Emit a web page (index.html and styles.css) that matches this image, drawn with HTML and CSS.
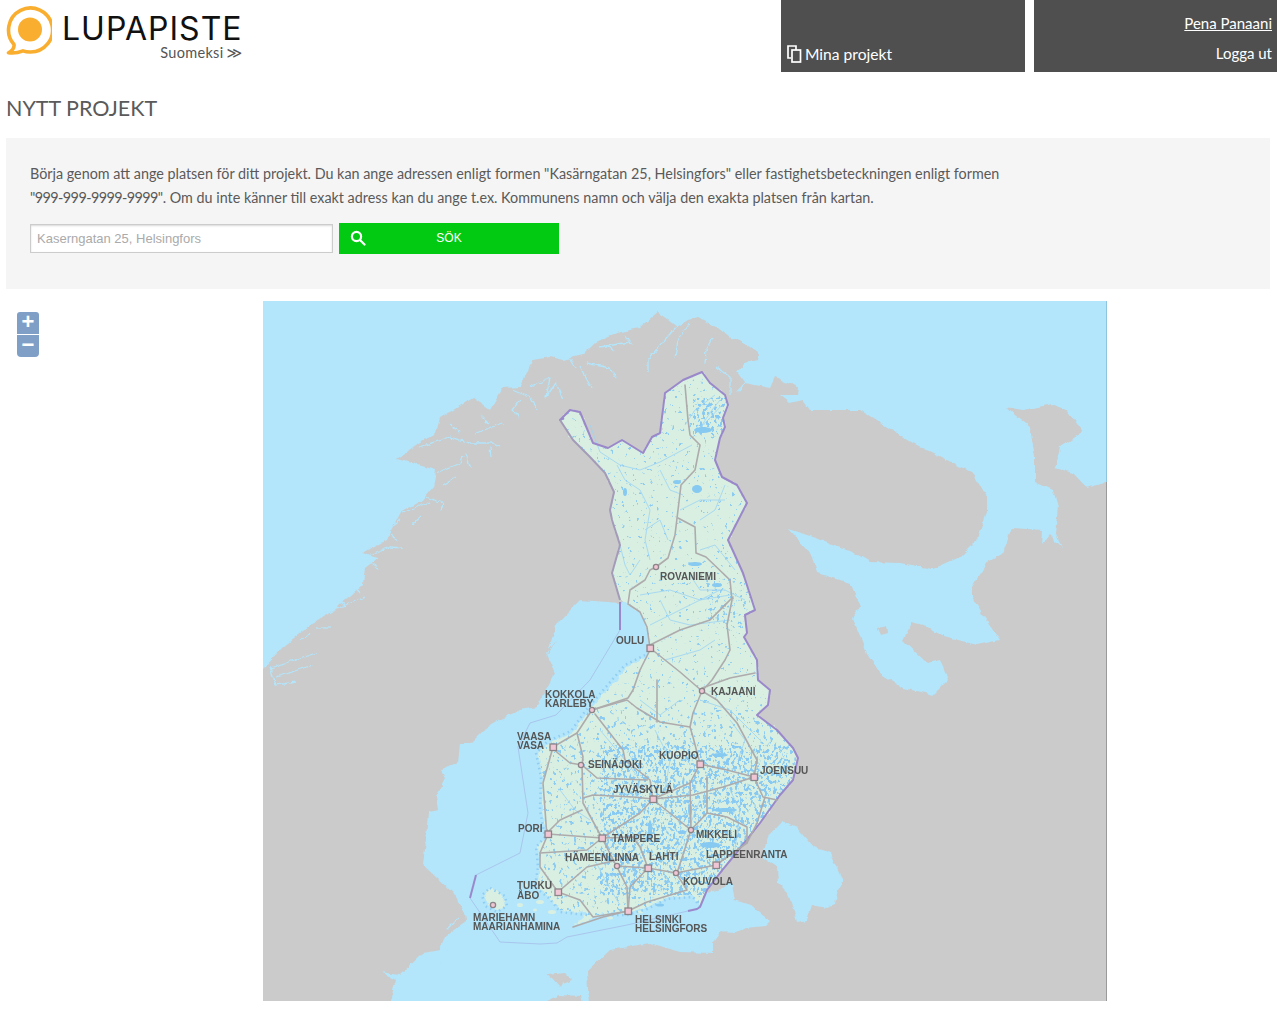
FILE: index.html
```html
<!DOCTYPE html>
<html lang="sv">
<head>
<meta charset="utf-8">
<title>Lupapiste - Nytt projekt</title>
<link rel="stylesheet" href="styles.css">
</head>
<body>
<header class="site-header">
  <a class="logo" href="#">
    <svg class="logo-mark" viewBox="0 0 52 58" width="52" height="58">
      <path class="logo-ring" d="M30 52A22 22 0 1 0 14 44.500C14.500 48 12 51 8.500 52.800C14 53.500 19 52.500 23 50.800Q26 52 30 52Z"/>
      <circle class="logo-dot" cx="30" cy="29.500" r="12"/>
    </svg>
    <span class="logo-words">
      <span class="logo-name">LUPAPISTE</span>
      <span class="logo-lang">Suomeksi <span class="lang-arrows">≫</span></span>
    </span>
  </a>
  <nav class="nav-boxes">
    <a class="nav-box nav-projects" href="#">
      <svg class="copy-icon" viewBox="0 0 15 18" width="15" height="18">
        <path d="M4 13H1V1H9V5"/><rect x="5" y="5" width="8.500" height="12"/>
      </svg>
      <span>Mina projekt</span>
    </a>
    <div class="nav-box nav-user">
      <a class="user-name" href="#">Pena Panaani</a>
      <a class="logout" href="#">Logga ut</a>
    </div>
  </nav>
</header>
<main>
  <h1 class="page-title">NYTT PROJEKT</h1>
  <section class="search-panel">
    <p class="intro">Börja genom att ange platsen för ditt projekt. Du kan ange adressen enligt formen "Kasärngatan 25, Helsingfors" eller fastighetsbeteckningen enligt formen <span class="digits">"999-999-9999-9999"</span>. Om du inte känner till exakt adress kan du ange t.ex. Kommunens namn och välja den exakta platsen från kartan.</p>
    <form class="search-form">
      <input class="search-input" type="text" placeholder="Kaserngatan 25, Helsingfors">
      <button class="search-button" type="button">
        <svg class="search-icon" viewBox="0 0 16 16" width="16" height="16"><circle cx="6.500" cy="6.500" r="4.600"/><path d="M10 10L14.500 14.500"/></svg>
        <span>SÖK</span>
      </button>
    </form>
  </section>
  <section class="map-area">
    <div class="zoom-control">
      <button class="zoom-btn zoom-in" type="button">+</button>
      <button class="zoom-btn zoom-out" type="button">−</button>
    </div>
    <svg class="map" viewBox="263 301 844 700" width="844" height="700">
      <defs>
        <filter id="rough" filterUnits="userSpaceOnUse" x="240" y="280" width="900" height="740" color-interpolation-filters="sRGB">
          <feTurbulence type="fractalNoise" baseFrequency=".1" numOctaves="3" seed="7"/>
          <feDisplacementMap in="SourceGraphic" scale="5" xChannelSelector="R" yChannelSelector="G"/>
          <feGaussianBlur stdDeviation=".35"/>
        </filter>
        <filter id="roughFine" filterUnits="userSpaceOnUse" x="240" y="280" width="900" height="740" color-interpolation-filters="sRGB">
          <feTurbulence type="fractalNoise" baseFrequency=".18" numOctaves="2" seed="5"/>
          <feDisplacementMap in="SourceGraphic" scale="5" xChannelSelector="R" yChannelSelector="G"/>
          <feGaussianBlur stdDeviation=".4"/>
        </filter>
        <filter id="soft" filterUnits="userSpaceOnUse" x="240" y="280" width="900" height="740">
          <feGaussianBlur stdDeviation=".35"/>
        </filter>
        <filter id="speckLight" x="0" y="0" width="1" height="1" color-interpolation-filters="sRGB">
          <feTurbulence type="fractalNoise" baseFrequency=".28" numOctaves="2" seed="3"/>
          <feColorMatrix values="0 0 0 0 .55  0 0 0 0 .80  0 0 0 0 .95  0 0 0 16 -11"/>
        </filter>
        <filter id="speckMid" x="0" y="0" width="1" height="1" color-interpolation-filters="sRGB">
          <feTurbulence type="fractalNoise" baseFrequency=".3 .24" numOctaves="2" seed="9"/>
          <feColorMatrix values="0 0 0 0 .55  0 0 0 0 .80  0 0 0 0 .95  0 0 0 14 -8.700"/>
        </filter>
        <filter id="speckDense" x="0" y="0" width="1" height="1" color-interpolation-filters="sRGB">
          <feTurbulence type="fractalNoise" baseFrequency=".34 .26" numOctaves="2" seed="11"/>
          <feColorMatrix values="0 0 0 0 .53  0 0 0 0 .79  0 0 0 0 .95  0 0 0 14 -7.600"/>
        </filter>
        <clipPath id="finlandClip">
          <path d="M702 372L710 383L725 395L728 405L723 418L725 427L720 438L715 460L722 477L737 485L747 503L728 540L743 573L755 610L745 615L747 633L744 637L757 660L758 680L770 690L768 705L757 715L777 730L793 748L798 758L793 780L780 795L760 823L733 857L720 873L707 890L700 907L693 895L667 897L647 907L627 913L603 913L573 927L587 913L560 910L550 897L537 887L540 867L538 847L547 837L542 810L543 777L538 753L550 743L573 733L588 712L607 690L617 680L627 667L647 657L650 643L647 627L640 612L627 603L620 600L612 573L620 545L612 520L610 510L614 492L605 473L590 457L573 440L560 420L570 410L580 412L593 443L608 448L622 440L643 453L652 437L660 433L665 393L683 380Z"/>
        </clipPath>
      </defs>

      <rect class="sea" x="263" y="301" width="844" height="700"/>
      <g filter="url(#rough)">
        <path class="land" d="M250 672L263 668L283 647L313 623L330 612L350 597L363 585L365 567L378 557L363 553L386 540L400 513L423 500L433 487L436 470L397 459L420 442L436 433L440 418L473 398L490 410L503 388L520 387L533 360L550 357L563 360L583 355L596 342L620 332L640 328L647 322L658 313L668 320L677 327L688 320L698 317L712 325L718 328L730 338L740 340L758 353L757 360L745 363L737 372L745 383L770 388L775 377L798 387L797 395L780 395L790 403L803 400L810 410L860 410L913 443L963 468L973 473L987 497L987 513L977 540L960 557L933 569L900 563L870 562L853 552L837 547L813 537L788 529L813 557L817 573L850 583L860 607L852 618L867 653L880 673L903 688L933 695L948 680L940 660L927 663L903 640L912 623L930 628L947 637L977 645L1000 640L987 620L972 597L972 587L987 562L1003 553L1012 528L1043 530L1042 545L1050 535L1063 548L1055 533L1058 507L1053 490L1035 482L1035 457L1030 427L1005 407L1023 410L1053 404L1067 410L1083 432L1060 447L1055 468L1073 473L1087 488L1107 482L1125 478L1125 1020L590 1020L587 972L610 950L650 943L680 952L713 953L713 933L727 932L740 927L750 912L772 922L773 923L750 909L732 902L728 887L707 893L680 700L665 620L628 597L621 603L580 600L556 625L546 658L556 640L546 653L555 673L536 707L520 710L503 718L483 730L470 743L460 743L458 763L441 770L445 780L436 797L438 810L428 812L426 840L423 865L436 877L453 893L465 913L466 922L445 937L440 950L423 953L400 975L380 972L396 980L391 998L393 1020L250 1020Z"/>
        <path class="land" d="M547 975L565 973L572 980L562 984L560 988L553 980Z"/>
        <path class="land" d="M543 1003L560 995L580 996L582 1003Z"/>
        <path class="sea-fill" d="M782 822L797 828L813 847L830 853L840 875L844 880L838 890L835 905L827 908L812 905L807 920L797 922L788 893L778 883L777 867L762 857L768 837Z"/>
        <path class="land" d="M878 628L886 626L887 634L881 636Z"/>
        <path class="sea-fill" d="M1012 511L1018 513L1017 517L1012 515Z"/>
        <path class="sea-fill" d="M731 880L735 900L750 905L770 921L765 926L745 928L735 933L720 932L715 940L700 950L695 920Z"/>
      </g>
      <g class="fjords" filter="url(#roughFine)">
        <path d="M677 326L660 345L648 360L648 372"/>
        <path d="M690 322L678 340L675 358"/>
        <path d="M712 338L706 350L705 365"/>
        <path d="M716 367L730 377L730 396"/>
        <path d="M745 383L737 392"/>
        <path d="M420 447L450 437L470 443L493 443L500 447"/>
        <path d="M466 453L470 467"/>
        <path d="M490 447L491 458"/>
        <path d="M436 473L460 463L463 457"/>
        <path d="M443 485L456 477"/>
        <path d="M426 497L443 503L441 510"/>
        <path d="M403 513L416 507L430 502"/>
        <path d="M383 533L400 520"/>
        <path d="M363 557L390 547L403 548"/>
        <path d="M370 563L378 568"/>
        <path d="M326 613L366 597"/>
        <path d="M316 628L330 628"/>
        <path d="M476 433L503 423"/>
        <path d="M513 390L530 397L538 410"/>
        <path d="M530 387L550 378L546 397L556 383L563 400"/>
        <path d="M580 367L591 387"/>
        <path d="M586 363L610 368L616 378"/>
        <path d="M600 347L630 342"/>
        <path d="M270 668L316 653"/>
        <path d="M270 668L276 685L296 682"/>
        <path d="M276 677L313 665"/>
        <path d="M607 345L615 352"/>
        <path d="M625 335L632 345"/>
        <path d="M570 358L576 368"/>
        <path d="M520 400L512 410L520 418"/>
        <path d="M480 415L490 425"/>
        <path d="M450 425L460 432"/>
        <path d="M412 525L420 516"/>
        <path d="M390 535L398 540"/>
        <path d="M350 585L360 592"/>
        <path d="M338 600L346 606"/>
        <path d="M300 640L310 634"/>
        <path d="M440 965L448 948"/>
        <path d="M446 930L458 918"/>
      </g>

      <g filter="url(#soft)">
        <path class="finland" filter="url(#roughFine)" d="M702 372L710 383L725 395L728 405L723 418L725 427L720 438L715 460L722 477L737 485L747 503L728 540L743 573L755 610L745 615L747 633L744 637L757 660L758 680L770 690L768 705L757 715L777 730L793 748L798 758L793 780L780 795L760 823L733 857L720 873L707 890L700 907L693 895L667 897L647 907L627 913L603 913L573 927L587 913L560 910L550 897L537 887L540 867L538 847L547 837L542 810L543 777L538 753L550 743L573 733L588 712L607 690L617 680L627 667L647 657L650 643L647 627L640 612L627 603L620 600L612 573L620 545L612 520L610 510L614 492L605 473L590 457L573 440L560 420L570 410L580 412L593 443L608 448L622 440L643 453L652 437L660 433L665 393L683 380Z"/>
        <path class="finland" filter="url(#roughFine)" d="M484 895L490 889L497 890L503 897L505 906L497 910L488 905Z"/>
        <g class="islets">
          <ellipse cx="520" cy="905" rx="3" ry="2"/><ellipse cx="530" cy="895" rx="3" ry="2"/><ellipse cx="540" cy="902" rx="4" ry="2"/>
          <ellipse cx="552" cy="912" rx="4" ry="2"/><ellipse cx="535" cy="910" rx="2" ry="1.500"/><ellipse cx="525" cy="885" rx="2" ry="2"/>
          <ellipse cx="610" cy="918" rx="3" ry="1.500"/><ellipse cx="640" cy="912" rx="3" ry="1.500"/>
        </g>
        <path class="coast-specks" d="M700 907L693 897L667 899L647 909L627 915L603 915M587 915L560 912L550 899L535 887L538 867L536 847L545 837L540 810L541 777L536 753L548 741L571 731L586 710L605 688L625 665L645 655M490 888L505 896L507 906L497 912L485 906L482 895Z"/>
        <g clip-path="url(#finlandClip)">
          <rect x="550" y="360" width="250" height="350" filter="url(#speckLight)"/>
          <rect x="535" y="710" width="265" height="205" filter="url(#speckMid)"/>
          <rect x="600" y="745" width="190" height="150" filter="url(#speckDense)"/>
          <rect x="693" y="398" width="34" height="38" filter="url(#speckDense)"/>
          <rect x="705" y="578" width="45" height="50" filter="url(#speckMid)"/>
        </g>
        <g class="rivers">
          <path d="M685 425L695 410L715 395"/><path d="M702 425L712 410L720 400"/><path d="M695 432L708 420L722 405"/>
          <path d="M590 425L600 452L620 465L640 470L660 462L692 445"/>
          <path d="M617 465L625 480L640 490L650 510L645 540L650 560"/>
          <path d="M660 470L670 490L683 495"/><path d="M680 510L700 500L725 500"/><path d="M700 520L715 510L725 485"/>
          <path d="M645 530L660 520L668 540"/><path d="M620 545L625 565L630 575L640 560"/>
          <path d="M700 550L715 545L735 570"/><path d="M640 595L670 590L700 600L730 595"/>
          <path d="M650 625L680 610L720 590"/><path d="M660 600L670 620L690 625L730 620"/>
          <path d="M690 575L700 590L725 590L745 600"/><path d="M665 660L700 650L715 640"/>
          <path d="M700 700L730 710L760 740"/><path d="M730 720L745 740L738 760"/><path d="M640 700L660 715L680 700"/>
          <path d="M600 730L625 760L640 780L635 800"/><path d="M655 730L670 760L665 790"/>
          <path d="M700 800L690 825L670 860"/><path d="M730 790L740 810L735 850"/><path d="M560 790L575 810L590 820"/>
          <path d="M590 850L605 880L620 905"/><path d="M655 820L640 850"/>
        </g>
        <g class="lakes">
          <ellipse cx="677" cy="482" rx="4" ry="2"/><ellipse cx="697" cy="489" rx="5" ry="4"/><ellipse cx="703" cy="430" rx="9" ry="3"/>
          <ellipse cx="625" cy="492" rx="2" ry="4"/><ellipse cx="717" cy="585" rx="5" ry="2"/><ellipse cx="695" cy="564" rx="7" ry="2"/>
          <ellipse cx="690" cy="810" rx="2" ry="6"/><ellipse cx="725" cy="810" rx="12" ry="2"/><ellipse cx="710" cy="845" rx="10" ry="3"/>
          <ellipse cx="650" cy="830" rx="2" ry="10"/><ellipse cx="720" cy="755" rx="7" ry="2"/><ellipse cx="660" cy="905" rx="4" ry="1.500"/>
        </g>
        <path class="sea-border" d="M620 630L590 680L556 715L530 723L518 747L528 813L520 853L476 875"/>
        <path class="sea-border" d="M470 898L500 942L540 944L557 943L567 937L627 925L688 911"/>
        <path class="border" d="M688 911L697 909L700 907L707 890L720 873L733 857L760 823L780 795L793 780L798 758L793 748L777 730L757 715L768 705L770 690L758 680L757 660L744 637L747 633L745 615L755 610L743 573L728 540L747 503L737 485L722 477L715 460L720 438L725 427L723 418L728 405L725 395L710 383L702 372L683 380L665 393L660 433L652 437L643 453L622 440L608 448L593 443L580 412L570 410L560 420L564 418"/>
        <path class="border-dim" d="M560 420L573 440L590 457L605 473L614 492L610 510L612 520L620 545L612 573L620 600"/>
        <path class="border" d="M620 602L620 630"/>
        <path class="border" d="M476 875L470 898"/>
        <g class="roads">
          <path d="M650 648L647 627L640 612L628 604L630 590L645 580L650 570L656 567L668 558L675 535L678 510L681 485L695 470L700 445L690 435L688 420L685 385"/>
          <path d="M678 518L695 527L696 553L706 557L730 580L732 600L727 625L730 650L725 660L712 680L702 691"/>
          <path d="M650 645L680 630L710 620L733 597"/>
          <path d="M650 648L665 660L680 672L702 691"/>
          <path d="M702 688L730 678L755 673"/>
          <path d="M650 650L640 670L633 690L628 698L592 710"/>
          <path d="M592 710L627 700L637 708L660 722L690 727L693 713L702 691"/>
          <path d="M657 680L657 722"/>
          <path d="M592 710L577 733L553 747"/>
          <path d="M577 733L583 757L582 765L583 803L602 838"/>
          <path d="M595 714L623 750L625 760L650 780L653 799"/>
          <path d="M553 747L543 783L547 837"/>
          <path d="M553 749L570 763L582 765"/>
          <path d="M582 765L597 778L647 780"/>
          <path d="M583 798L593 795L633 797L653 799"/>
          <path d="M653 799L690 783L700 764"/>
          <path d="M700 764L693 737L690 727"/>
          <path d="M700 764L727 770L754 777"/>
          <path d="M754 777L757 760L737 723L717 700L702 691"/>
          <path d="M754 777L763 797L777 800"/>
          <path d="M765 797L757 823L747 843L716 865"/>
          <path d="M653 799L693 795L723 787L754 777"/>
          <path d="M656 802L691 830"/>
          <path d="M653 799L640 813L602 838"/>
          <path d="M548 834L602 838"/>
          <path d="M548 832L560 820L582 810"/>
          <path d="M691 830L677 873"/>
          <path d="M691 830L707 813L727 817L747 827L747 843"/>
          <path d="M690 783L691 830"/>
          <path d="M707 777L707 813"/>
          <path d="M602 838L617 867"/>
          <path d="M602 838L633 837L640 847L648 868"/>
          <path d="M617 866L648 868L676 873L716 865"/>
          <path d="M648 868L630 887L628 912"/>
          <path d="M617 867L627 887L628 912"/>
          <path d="M558 892L587 867L617 860"/>
          <path d="M558 892L580 900L593 917L628 911"/>
          <path d="M573 927L603 917L628 911"/>
          <path d="M548 834L540 853L540 867L558 892"/>
          <path d="M540 853L587 850L602 838"/>
          <path d="M628 911L647 902L687 890L676 873"/>
        </g>
      </g>

      <g class="markers">
        <circle cx="656" cy="567" r="2.600"/><circle cx="702" cy="691" r="2.600"/><circle cx="592" cy="710" r="2.600"/>
        <circle cx="581" cy="765" r="2.600"/><circle cx="691" cy="830" r="2.600"/><circle cx="617" cy="866" r="2.600"/>
        <circle cx="676" cy="873" r="2.600"/><circle cx="493" cy="905" r="2.600"/>
        <rect x="647" y="645" width="6.500" height="6.500"/><rect x="550" y="744" width="6.500" height="6.500"/>
        <rect x="697" y="761" width="6.500" height="6.500"/><rect x="751" y="774" width="6.500" height="6.500"/>
        <rect x="650" y="796" width="6.500" height="6.500"/><rect x="545" y="831" width="6.500" height="6.500"/>
        <rect x="599" y="835" width="6.500" height="6.500"/><rect x="645" y="865" width="6.500" height="6.500"/>
        <rect x="713" y="862" width="6.500" height="6.500"/><rect x="555" y="889" width="6.500" height="6.500"/>
        <rect x="625" y="908" width="6.500" height="6.500"/>
      </g>

      <g class="labels">
        <text x="660" y="580">ROVANIEMI</text>
        <text x="616" y="644">OULU</text>
        <text x="711" y="695">KAJAANI</text>
        <text x="545" y="698">KOKKOLA</text>
        <text x="545" y="707">KARLEBY</text>
        <text x="517" y="740">VAASA</text>
        <text x="517" y="749">VASA</text>
        <text x="659" y="759">KUOPIO</text>
        <text x="588" y="768">SEINÄJOKI</text>
        <text x="760" y="774">JOENSUU</text>
        <text x="613" y="793">JYVÄSKYLÄ</text>
        <text x="518" y="832">PORI</text>
        <text x="696" y="838">MIKKELI</text>
        <text x="612" y="842">TAMPERE</text>
        <text x="565" y="861">HÄMEENLINNA</text>
        <text x="649" y="860">LAHTI</text>
        <text x="706" y="858">LAPPEENRANTA</text>
        <text x="683" y="885">KOUVOLA</text>
        <text x="517" y="889">TURKU</text>
        <text x="517" y="899">ÅBO</text>
        <text x="473" y="921">MARIEHAMN</text>
        <text x="473" y="930">MAARIANHAMINA</text>
        <text x="635" y="923">HELSINKI</text>
        <text x="635" y="932">HELSINGFORS</text>
      </g>
      <path class="map-edge" d="M1106.500 301V482"/>
      <path class="map-edge-land" d="M1106.500 482V1001"/>
    </svg>
  </section>
</main>
</body>
</html>
```
FILE: styles.css
```css
* { box-sizing: border-box; }
html, body { margin: 0; padding: 0; }
body {
  background: #fff;
  color: #555;
  font-family: "Lato", "Open Sans", sans-serif;
  width: 1282px;
  overflow-x: hidden;
}
a { color: inherit; text-decoration: none; }

.site-header {
  display: flex;
  justify-content: space-between;
  height: 72px;
  padding: 0 5px 0 0;
}
.logo { display: flex; align-items: flex-start; }
.logo-mark { display: block; flex: none; margin-right: 10px; }
.logo-ring { fill: none; stroke: #f9ae2f; stroke-width: 3.6; stroke-linejoin: round; }
.logo-dot { fill: #f9ae2f; }
.logo-words { display: flex; flex-direction: column; align-items: flex-end; padding-top: 13px; }
.logo-name {
  font-family: "Inter", "Liberation Sans", sans-serif;
  font-size: 32px;
  line-height: 32px;
  letter-spacing: 1px;
  color: #111;
}
.logo-lang { font-size: 14.500px; line-height: 15px; letter-spacing: .3px; color: #555; }
.lang-arrows { font-family: "DejaVu Sans", sans-serif; font-size: 15px; margin-left: -1px; }

.nav-boxes { display: flex; gap: 9px; }
.nav-box {
  background: #4f4f4f;
  color: #fff;
  height: 72px;
  display: flex;
}
.nav-projects {
  width: 244px;
  align-items: flex-end;
  padding: 0 0 8px 6px;
  font-size: 15.600px;
  line-height: 20px;
  gap: 3px;
}
.copy-icon { display: block; fill: none; stroke: #fff; stroke-width: 1.7; margin-bottom: 1px; }
.nav-user {
  width: 243px;
  flex-direction: column;
  align-items: flex-end;
  padding: 14px 5px 0 0;
  font-size: 15px;
  line-height: 18px;
}
.user-name { text-decoration: underline; }
.logout { margin-top: 12px; }

.page-title {
  margin: 0;
  padding: 23px 0 0 6px;
  height: 66px;
  font-weight: 400;
  font-size: 21.500px;
  line-height: 26px;
  color: #5a5a5a;
}

.search-panel {
  margin: 0 12px 0 6px;
  height: 151px;
  background: #f5f5f5;
  padding: 24px 24px 0;
}
.intro {
  margin: 0;
  width: 985px;
  font-size: 14.350px;
  line-height: 24px;
  color: #5a5a5a;
}
.digits { letter-spacing: -.55px; }
.search-form { display: flex; align-items: center; gap: 6px; margin-top: 13px; }
.search-input {
  width: 303px;
  height: 29px;
  border: 1px solid #ccc;
  box-shadow: inset 0 1px 2px rgba(0,0,0,.15);
  background: #fff;
  padding: 0 6px;
  font-family: "Liberation Sans", Arial, sans-serif;
  font-size: 13px;
  color: #333;
}
.search-input::placeholder { color: #aaa; opacity: 1; }
.search-button {
  position: relative;
  width: 220px;
  height: 31px;
  border: 0;
  padding: 0 0 2px;
  background: #02ca12;
  color: #fff;
  font-family: "Liberation Sans", Arial, sans-serif;
  font-size: 12px;
  display: flex;
  align-items: center;
  justify-content: center;
}
.search-icon {
  position: absolute;
  left: 11px;
  top: 7px;
  fill: none;
  stroke: #fff;
  stroke-width: 2.2;
  stroke-linecap: round;
}

.map-area { position: relative; margin: 12px 0 0 263px; height: 700px; width: 844px; }
.map { display: block; }
.zoom-control {
  position: absolute;
  left: -246px;
  top: 11px;
  display: flex;
  flex-direction: column;
  gap: 1px;
}
.zoom-btn {
  width: 22px;
  height: 22px;
  border: 0;
  padding: 0 0 2px;
  background: #7f9fc7;
  color: #fff;
  font-family: "Liberation Sans", Arial, sans-serif;
  font-weight: 700;
  font-size: 22px;
  line-height: 20px;
}
.zoom-in { border-radius: 3px 3px 0 0; }
.zoom-out { border-radius: 0 0 4px 4px; }

.sea { fill: #b3e5fb; }
.sea-fill { fill: #b3e5fb; }
.land { fill: #cbcbcb; }
.fjords path { fill: none; stroke: #b3e5fb; stroke-width: 1.300; stroke-linejoin: round; }
.finland { fill: #d8efe2; }
.islets ellipse { fill: #d8efe2; }
.coast-specks { fill: none; stroke: #8fcdf3; stroke-width: 2.500; stroke-dasharray: 1.500 3.500; }
.rivers path { fill: none; stroke: #9cd3f4; stroke-width: .8; }
.lakes ellipse { fill: #86c9f1; }
.border { fill: none; stroke: #9a88cb; stroke-width: 2; stroke-linejoin: round; }
.border-dim { fill: none; stroke: #a49bb8; stroke-width: 2; stroke-linejoin: round; }
.sea-border { fill: none; stroke: #a9c6ec; stroke-width: 1; }
.roads path { fill: none; stroke: #aeabac; stroke-width: 1.600; stroke-linejoin: round; stroke-linecap: round; }
.markers circle, .markers rect { fill: #f1c6d4; stroke: #8b8488; stroke-width: 1.300; }
.labels text {
  font-family: "Liberation Sans", Arial, sans-serif;
  font-size: 10px;
  font-weight: 700;
  fill: #555;
}
.map-edge { stroke: #8fc5de; stroke-width: 1; fill: none; }
.map-edge-land { stroke: #9a9a9a; stroke-width: 1; fill: none; }
```
